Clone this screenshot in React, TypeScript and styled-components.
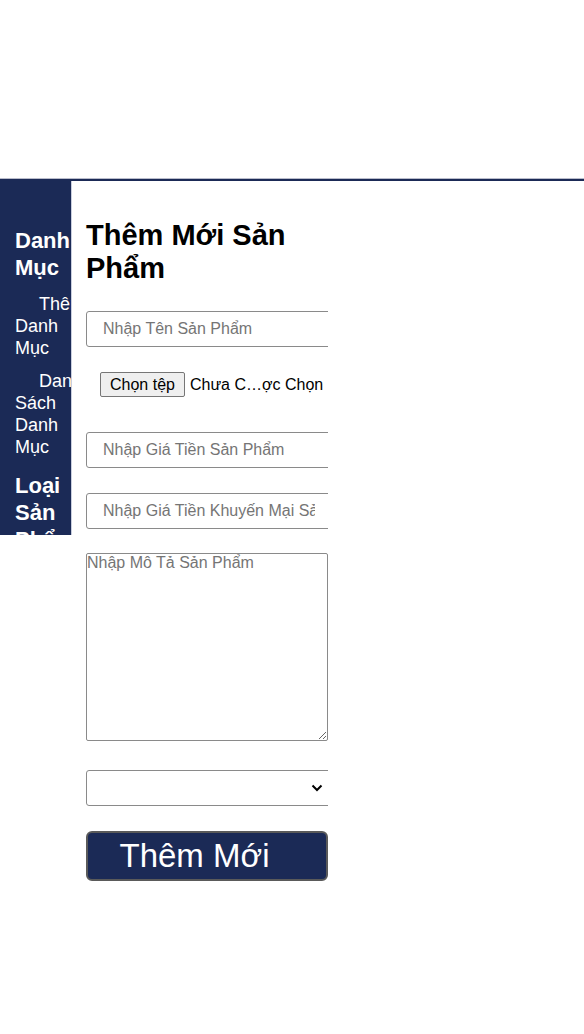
import React from "react";
import styled, { createGlobalStyle } from "styled-components";

const Global = createGlobalStyle`
  html, body { margin: 0; padding: 0; background: #fff; }
  body { font-family: "Liberation Sans", Arial, sans-serif; }
  * { box-sizing: border-box; }
`;

const navy = "#1b2a56";

const Header = styled.header`
  height: 179px;
  border-bottom: 1px solid #b9bccb;
`;

const Layout = styled.div`
  display: flex;
  align-items: flex-start;
  border-top: 2px solid ${navy};
`;

const Sidebar = styled.nav`
  width: 72px;
  height: 354px;
  flex: none;
  overflow: hidden;
  background: ${navy};
  border-right: 1px solid #c9cede;
  padding: 32px 0 0 15px;
  color: #fff;
`;

const SideTitle = styled.h3`
  margin: 14px 0 12px;
  font-size: 22px;
  line-height: 27px;
  font-weight: bold;
`;

const SideItem = styled.div`
  font-size: 18px;
  line-height: 22px;
  text-indent: 24px;
  margin-bottom: 11px;
`;

const Main = styled.main`
  padding: 0 0 0 14px;
`;

const Title = styled.h2`
  margin: 38px 0 26px;
  font-size: 29px;
  line-height: 33px;
  font-weight: bold;
  width: 242px;
  color: #000;
`;

const Form = styled.form`
  width: 242px;
  overflow: hidden;
  display: flex;
  flex-direction: column;
`;

const TextInput = styled.input<{ $gap?: number }>`
  width: 246px;
  height: 36px;
  border: 1px solid #8a8a8a;
  border-radius: 3px;
  padding: 0 16px;
  font-family: "Liberation Sans", Arial, sans-serif;
  font-size: 16px;
  margin-bottom: ${(p) => p.$gap ?? 25}px;
  outline: none;
  &::placeholder { color: #757575; }
`;

const FileRow = styled.div`
  height: 35px;
  margin-bottom: 25px;
  display: flex;
  align-items: flex-start;
  padding-left: 14px;
  gap: 5px;
  font-size: 16px;
  white-space: nowrap;
`;

const FileButton = styled.span`
  display: inline-flex;
  align-items: center;
  height: 25px;
  padding: 0 9px;
  border: 1px solid #767676;
  border-radius: 2px;
  background: #efefef;
  color: #000;
  font-size: 16px;
`;

const FileText = styled.span`
  line-height: 25px;
  color: #000;
`;

const TextArea = styled.textarea`
  width: 242px;
  height: 188px;
  border: 1px solid #8a8a8a;
  border-radius: 2px;
  padding: 0;
  font-family: "Liberation Sans", Arial, sans-serif;
  font-size: 16px;
  margin-bottom: 29px;
  resize: both;
  outline: none;
  &::placeholder { color: #757575; }
`;

const SelectBox = styled.div`
  position: relative;
  width: 246px;
  height: 36px;
  border: 1px solid #8a8a8a;
  border-radius: 3px;
  margin-bottom: 25px;
`;

const Chevron = styled.svg`
  position: absolute;
  left: 224px;
  top: 13px;
`;

const Submit = styled.button`
  width: 242px;
  height: 50px;
  background: ${navy};
  color: #fff;
  border: 2px solid #5a5a5a;
  border-radius: 6px;
  font-family: "Liberation Sans", Arial, sans-serif;
  font-size: 33px;
  padding: 0 25px 0 0;
  text-align: center;
`;

export default function App() {
  return (
    <>
      <Global />
      <Header />
      <Layout>
        <Sidebar>
          <SideTitle>Danh Mục</SideTitle>
          <SideItem>Thêm Danh Mục</SideItem>
          <SideItem>Danh Sách Danh Mục</SideItem>
          <SideTitle>Loại Sản Phẩm</SideTitle>
        </Sidebar>
        <Main>
          <Title>Thêm Mới Sản Phẩm</Title>
          <Form onSubmit={(e) => e.preventDefault()}>
            <TextInput placeholder="Nhập Tên Sản Phẩm" />
            <FileRow>
              <FileButton>Chọn tệp</FileButton>
              <FileText>Chưa C…ợc Chọn</FileText>
            </FileRow>
            <TextInput placeholder="Nhập Giá Tiền Sản Phẩm" />
            <TextInput placeholder="Nhập Giá Tiền Khuyến Mại Sản Phẩm" $gap={24} />
            <TextArea placeholder="Nhập Mô Tả Sản Phẩm" />
            <SelectBox>
              <Chevron width="12" height="8" viewBox="0 0 12 8">
                <path d="M1.5 1.5 L6 6 L10.5 1.5" fill="none" stroke="#000" strokeWidth="2" />
              </Chevron>
            </SelectBox>
            <Submit type="submit">Thêm Mới</Submit>
          </Form>
        </Main>
      </Layout>
    </>
  );
}
